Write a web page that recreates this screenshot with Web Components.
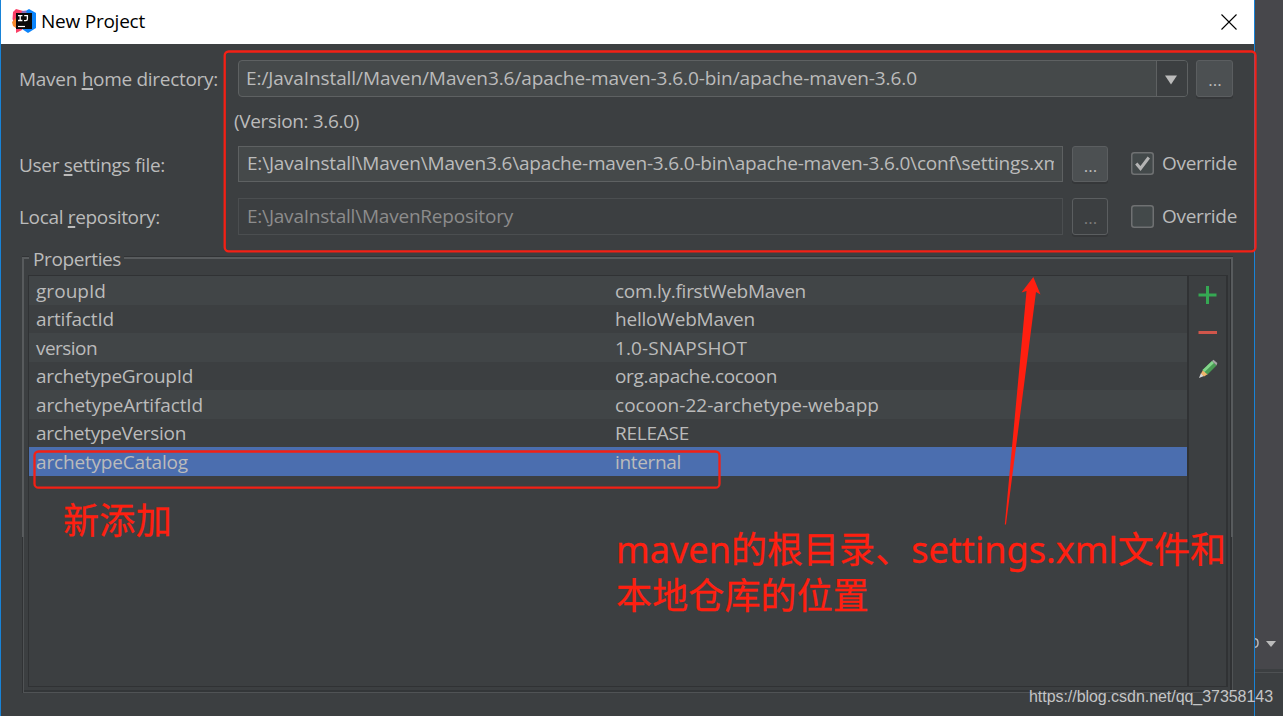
<!DOCTYPE html>
<html lang="en">
<head>
<meta charset="UTF-8">
<title>New Project</title>
<style>
  html, body {
    margin: 0;
    height: 716px;
    overflow: hidden;
    background: #47484b;
  }
  body {
    position: relative;
    display: grid;
    grid-template-columns: 1255px 1fr;
    font: 19px/28px "Open Sans", "Noto Sans", "Noto Sans CJK SC", sans-serif;
    color: #bbbbbb;
  }
</style>
</head>
<body>
<project-dialog>
  <title-bar slot="title" name="New Project"></title-bar>
  <form-row label="Maven home directory:" key="h" label-width="199" style="padding-top: 16px">
    <path-combo><fit-text width="671">E:/JavaInstall/Maven/Maven3.6/apache-maven-3.6.0-bin/apache-maven-3.6.0</fit-text></path-combo>
    <browse-button class="wide"></browse-button>
  </form-row>
  <version-hint><fit-text width="125">(Version: 3.6.0)</fit-text></version-hint>
  <form-row label="User settings file:" key="s" label-width="146" low>
    <path-field><fit-text width="814">E:\JavaInstall\Maven\Maven3.6\apache-maven-3.6.0-bin\apache-maven-3.6.0\conf\settings.xm</fit-text></path-field>
    <browse-button></browse-button>
    <check-option checked>Override</check-option>
  </form-row>
  <form-row label="Local repository:" key="r" label-width="141" style="padding-top: 16px">
    <path-field disabled><fit-text width="266">E:\JavaInstall\MavenRepository</fit-text></path-field>
    <browse-button disabled></browse-button>
    <check-option>Override</check-option>
  </form-row>
  <property-frame></property-frame>
</project-dialog>
<ide-edge></ide-edge>
<mark-layer></mark-layer>

<script>
  function define(name, markup, setup) {
    customElements.define(name, class extends HTMLElement {
      connectedCallback() {
        if (this.shadowRoot) return;
        this.attachShadow({ mode: "open" });
        this.shadowRoot.innerHTML = typeof markup === "function" ? markup(this) : markup;
        if (setup) setup(this);
      }
    });
  }

  // Spreads its text over an exact width with letter-spacing
  define("fit-text", `
    <style>
      :host { display: inline-block; vertical-align: top; }
      span { display: inline-block; vertical-align: top; white-space: pre; }
    </style><span><slot></slot></span>
  `, (el) => {
    const span = el.shadowRoot.querySelector("span");
    const count = el.textContent.length;
    const target = Number(el.getAttribute("width"));
    const fit = () => {
      span.style.letterSpacing = "0";
      const natural = span.getBoundingClientRect().width;
      if (natural && target && count) {
        span.style.letterSpacing = (target - natural) / count + "px";
      }
    };
    fit();
    // Elements that wrap this one may be defined later, so measure again
    window.addEventListener("load", fit);
  });

  define("project-dialog", `
    <style>
      :host {
        display: flex;
        flex-direction: column;
        box-sizing: border-box;
        height: 716px;
        background: #3c3f41;
        border-left: 1px solid #1883d7;
        border-right: 1px solid #1883d7;
      }
    </style>
    <slot name="title"></slot>
    <slot></slot>
  `);

  define("title-bar", (el) => `
    <style>
      :host {
        display: flex;
        align-items: center;
        flex: none;
        height: 44px;
        padding: 0 17px 0 10px;
        box-sizing: border-box;
        background: #fff;
        color: #000;
      }
      .logo { width: 26px; height: 26px; margin-right: 4px; margin-top: -2px; }
      .name { flex: 1; margin-top: -2px; }
      .close { width: 16px; height: 16px; margin-top: -1px; }
    </style>
    <svg class="logo" viewBox="0 0 26 26">
      <path d="M2 4 L5 1 L14 3.5 L11 22 L5 25 L5 20 L1.5 11 Z" fill="#fb3f66"/>
      <path d="M1 14 L5 10 V20 L2 18 Z" fill="#f98a2c"/>
      <path d="M13 4 L18 1 L25 5 V20 L17 25 L11 21 Z" fill="#0b84fb"/>
      <path d="M11 3 L15 2.6 L16 6 H10 Z" fill="#8b6fc0"/>
      <rect x="5" y="5" width="16" height="16" fill="#0a0a0a"/>
      <path d="M7 7.7 H11.4 M9.2 7.7 V12.5 M7 12.5 H11.4 M13.2 7.7 H16.4 V11 Q16.4 12.6 14.8 12.6 H13" fill="none" stroke="#fff" stroke-width="1.3"/>
      <path d="M7 18.5 H14" stroke="#fff" stroke-width="1.2"/>
    </svg>
    <span class="name"><fit-text width="104">${el.getAttribute("name")}</fit-text></span>
    <svg class="close" viewBox="0 0 16 16">
      <path d="M.5 .5 L15.5 15.5 M15.5 .5 L.5 15.5" stroke="#000" stroke-width="1.1"/>
    </svg>
  `);

  define("form-row", (el) => {
    const label = el.getAttribute("label");
    const key = el.getAttribute("key");
    const at = label.indexOf(" " + key) + 1;
    return `
      <style>
        :host {
          display: flex;
          align-items: center;
          flex: none;
          padding-left: 18px;
        }
        label { flex: none; width: 219px; }
        :host([low]) label { padding-top: 2px; }
        u { text-underline-offset: 2px; text-decoration-thickness: 1.5px; text-decoration-skip-ink: none; }
      </style>
      <label><fit-text width="${el.getAttribute("label-width")}">${label.slice(0, at)}<u>${key}</u>${label.slice(at + 1)}</fit-text></label>
      <slot></slot>
    `;
  });

  define("path-combo", `
    <style>
      :host {
        display: flex;
        flex: none;
        box-sizing: border-box;
        width: 950px;
        height: 37px;
        border: 1px solid #5e6162;
        border-radius: 4px;
        background: #45494a;
        overflow: hidden;
      }
      .value { flex: 1; padding: 3px 0 0 7px; }
      .arrow {
        display: grid;
        place-items: center;
        width: 30px;
        background: #3c3f41;
        border-left: 1px solid #5e6162;
      }
      svg { margin: 2px 2px 0 0; }
    </style>
    <div class="value"><slot></slot></div>
    <div class="arrow">
      <svg width="12" height="10" viewBox="0 0 12 10"><path d="M0 .5 H12 L6 9.5 Z" fill="#bbb"/></svg>
    </div>
  `);

  define("version-hint", `
    <style>
      :host { display: block; flex: none; box-sizing: border-box; height: 49px; padding: 10px 0 0 233px; }
    </style>
    <slot></slot>
  `);

  define("path-field", `
    <style>
      :host {
        flex: none;
        box-sizing: border-box;
        width: 825px;
        height: 36px;
        padding: 2px 8px 0;
        border: 1px solid #5e6162;
        background: #45494a;
      }
      :host([disabled]) { background: #3c3f41; border-color: #4b4e50; color: #8c8c8c; height: 37px; padding-top: 3px; }
      .clip { overflow: hidden; height: 30px; white-space: nowrap; }
    </style>
    <div class="clip"><slot></slot></div>
  `);

  define("browse-button", `
    <style>
      :host {
        display: grid;
        place-items: center;
        flex: none;
        box-sizing: border-box;
        width: 36px;
        height: 36px;
        margin-left: 9px;
        border: 1px solid #5b5e60;
        border-radius: 3px;
        background: #4c5052;
        box-shadow: 0 2px 0 #353739;
      }
      :host(.wide) { width: 37px; height: 37px; margin-left: 8px; }
      :host([disabled]) { background: #3c3f41; color: #7c7c7c; height: 37px; }
      span { font-size: 17px; padding: 3px 0 0 1px; }
    </style>
    <span>...</span>
  `);

  define("check-option", (el) => `
    <style>
      :host { display: flex; align-items: center; flex: none; margin-left: 23px; }
      svg { width: 23px; height: 23px; margin-right: 8px; }
      :host([checked]) svg { margin-top: -1px; }
      .text { margin-top: -2px; }
    </style>
    <svg viewBox="0 0 23 23">
      <rect x=".75" y=".75" width="21.5" height="21.5" rx="2.5" fill="#43494a" stroke="#6f7172" stroke-width="1.5"/>
      ${el.hasAttribute("checked") ? '<path d="M5.3 11.5 L9.5 16.5 L17.8 5.5" fill="none" stroke="#b4b4b4" stroke-width="3"/>' : ""}
    </svg>
    <fit-text class="text" width="75">${el.textContent}</fit-text>
  `);

  define("property-row", (el) => `
    <style>
      :host {
        display: grid;
        grid-template-columns: 579px 1fr;
        height: 28.5px;
        padding-left: 7px;
        line-height: 30px;
      }
      :host(:nth-child(odd)) { background: #414547; }
      :host(:nth-child(even)) { line-height: 28px; }
      :host([selected]) { background: #4b6eaf; }
    </style>
    <span><fit-text width="${el.getAttribute("name-width")}">${el.getAttribute("name")}</fit-text></span>
    <span><fit-text width="${el.getAttribute("value-width")}">${el.getAttribute("value")}</fit-text></span>
  `);

  const properties = [
    ["groupId", 70, "com.ly.firstWebMaven", 191],
    ["artifactId", 78, "helloWebMaven", 140],
    ["version", 61, "1.0-SNAPSHOT", 132],
    ["archetypeGroupId", 157, "org.apache.cocoon", 162],
    ["archetypeArtifactId", 167, "cocoon-22-archetype-webapp", 264],
    ["archetypeVersion", 150, "RELEASE", 74],
    ["archetypeCatalog", 152, "internal", 66],
  ];

  define("edit-tools", `
    <style>
      :host { display: flex; flex-direction: column; align-items: center; gap: 17px; padding: 9px 0 0 0; }
      svg { width: 20px; height: 20px; }
    </style>
    <svg viewBox="0 0 20 20"><path d="M9.5 1 V19 M.5 10 H18.5" stroke="#35a853" stroke-width="3"/></svg>
    <svg viewBox="0 0 20 20"><path d="M.5 10.5 H19" stroke="#d0564b" stroke-width="3"/></svg>
    <svg viewBox="0 0 20 20">
      <path d="M1 19 L3 14 L6 17 Z" fill="#d5d5d5"/>
      <path d="M3 14.5 L5 11 L10 15 L6 17.5 Z" fill="#efb46c"/>
      <path d="M4.5 11 L14 2 L18.5 6.5 L9.5 15.5 Z" fill="#499c54"/>
      <path d="M4.5 11 L14 2 L16 4 L6.5 13 Z" fill="#83d68b"/>
      <path d="M14 2 L15.5 .8 L19.3 4 L18.5 6.5 Z" fill="#a5a5a5"/>
    </svg>
  `);

  define("property-frame", () => `
    <style>
      :host {
        display: flex;
        flex-direction: column;
        flex: none;
        width: 1211px;
        height: 448px;
        margin: 10px 0 0 21px;
      }
      .head { display: flex; flex: none; height: 14px; }
      .head i {
        box-sizing: border-box;
        height: 3px;
        margin-top: 11px;
        border-top: 1px solid #313335;
        background: #585b5d;
      }
      .head .lead { width: 7px; }
      .head .rest { flex: 1; }
      .title { padding: 0 3px 0 4px; }
      .body {
        display: grid;
        grid-template-columns: 2px 1fr 3px;
        height: 434px;
      }
      .left {
        background:
          linear-gradient(#585b5d, #585b5d) 0 0 / 2px 278px no-repeat,
          linear-gradient(90deg, #313335 1px, #505355 1px);
      }
      .right {
        background:
          linear-gradient(90deg, #303234 1px, #585b5d 1px) 0 0 / 3px 278px no-repeat,
          linear-gradient(90deg, #303234 2px, #505355 2px);
      }
      .inside {
        padding: 16px 2px 0 4px;
        border-bottom: 1px solid #505355;
        box-shadow: inset 0 -2px #333638;
      }
      .panel {
        box-sizing: border-box;
        display: grid;
        grid-template-columns: 1158px 37px;
        column-gap: 2px;
        height: 412px;
        border: solid #303234;
        border-width: 1px 2px 1px 1px;
        background: linear-gradient(#303234, #303234) 1158px 0 / 2px 100% no-repeat;
      }
    </style>
    <div class="head">
      <i class="lead"></i>
      <span class="title"><fit-text width="88">Properties</fit-text></span>
      <i class="rest"></i>
    </div>
    <div class="body">
      <div class="left"></div>
      <div class="inside">
        <div class="panel">
          <div>${properties.map(([name, nw, value, vw]) =>
            `<property-row name="${name}" name-width="${nw}" value="${value}" value-width="${vw}"${name === "archetypeCatalog" ? " selected" : ""}></property-row>`
          ).join("")}</div>
          <edit-tools></edit-tools>
        </div>
      </div>
      <div class="right"></div>
    </div>
  `);

  // Strip of the IDE window that shows beside the dialog
  define("ide-edge", `
    <style>
      :host { display: flex; flex-direction: column; height: 716px; overflow: hidden; }
      .tools {
        display: flex;
        align-items: center;
        box-sizing: border-box;
        height: 669px;
        padding-top: 618px;
        background: #47474b;
      }
      .status { flex: 1; background: #3c3f41; }
      .status::before { content: ""; display: block; height: 1px; margin-top: 3px; background: #4e5153; }
      .bowl { margin: 0 7px 2px 0; }
    </style>
    <div class="tools">
      <svg class="bowl" width="4" height="10" viewBox="0 0 4 10"><path d="M0 .8 Q3 1 3 5 Q3 9 0 9.2" fill="none" stroke="#bbb" stroke-width="1.5"/></svg>
      <svg width="10" height="6" viewBox="0 0 10 6"><path d="M0 0 H10 L5 6 Z" fill="#bbb"/></svg>
    </div>
    <div class="status"></div>
  `);

  // Red marks and notes drawn over the dialog
  define("mark-layer", `
    <style>
      :host {
        position: absolute;
        inset: 0;
        font-family: "Noto Sans", "Noto Sans CJK SC", sans-serif;
        color: #ff1f10;
        pointer-events: none;
      }
      svg { position: absolute; inset: 0; }
      .note { position: absolute; white-space: nowrap; font-size: 36px; line-height: 46px; -webkit-text-stroke: .3px #ff1f10; }
      .added { left: 63px; top: 498px; }
      .paths { left: 616px; top: 527px; }
      .url {
        position: absolute;
        left: 1029px;
        top: 687px;
        font: 16px/19px "Liberation Sans", Arial, sans-serif;
        color: #c4c5c6;
      }
    </style>
    <svg width="1283" height="716">
      <g fill="none" stroke="#f42015" stroke-width="2.3">
        <rect x="224.7" y="51.5" width="1030.8" height="199.8" rx="4"/>
        <rect x="34.5" y="451.5" width="685" height="36.2" rx="4"/>
      </g>
      <path d="M1033.3 277 L1040.5 294.5 L1036 292 L1006 524.5 H1004.8 L1026.5 291 L1021.5 292.5 Z" fill="#ff1f10"/>
    </svg>
    <div class="note added"><fit-text width="109">新添加</fit-text></div>
    <div class="note paths">
      <div><fit-text width="610">maven的根目录、settings.xml文件和</fit-text></div>
      <div><fit-text width="253">本地仓库的位置</fit-text></div>
    </div>
    <div class="url"><fit-text width="244">https://blog.csdn.net/qq_37358143</fit-text></div>
  `);
</script>
</body>
</html>
